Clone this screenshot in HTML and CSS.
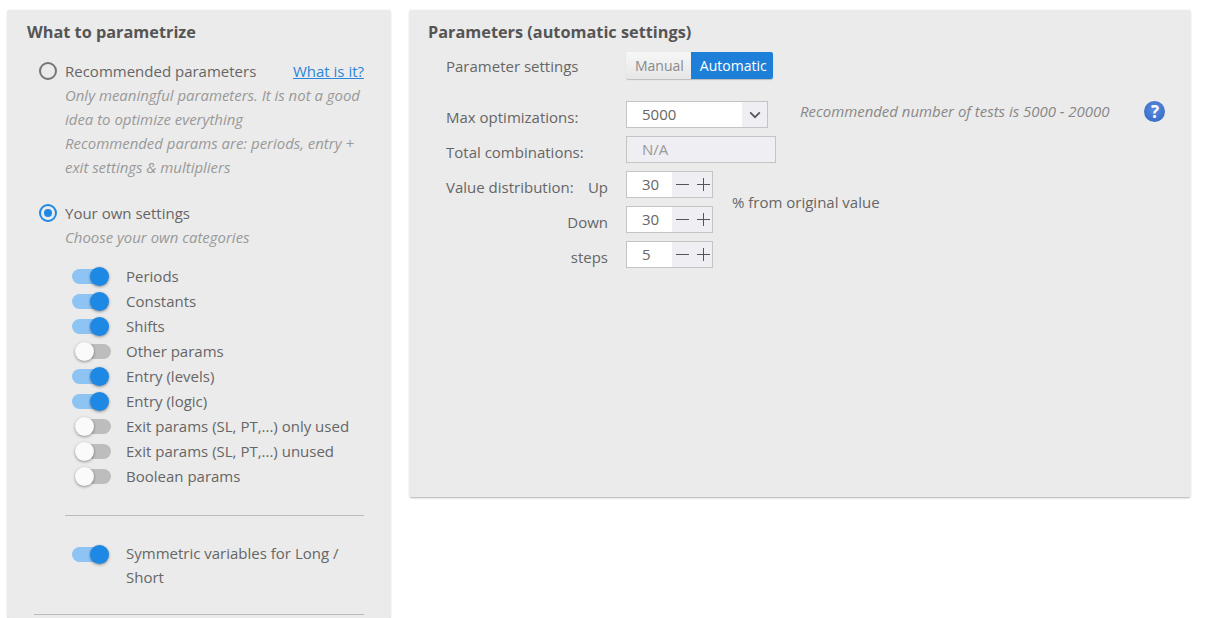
FILE: index.html
```html
<!DOCTYPE html>
<html lang="en">
<head>
    <meta charset="UTF-8">
    <title>Optimizer parameters</title>
    <link rel="stylesheet" href="styles.css">
</head>
<body>
    <div class="page">
        <div class="panel panel-left">
            <h2>What to parametrize</h2>

            <div class="radio-row">
                <span class="radio"></span>
                <span class="radio-label">Recommended parameters</span>
                <a class="help-link" href="#">What is it?</a>
            </div>
            <p class="hint">Only meaningful parameters. It is not a good idea to optimize everything<br>Recommended params are: periods, entry + exit settings &amp; multipliers</p>

            <div class="radio-row radio-row-own">
                <span class="radio checked"></span>
                <span class="radio-label">Your own settings</span>
            </div>
            <p class="hint">Choose your own categories</p>

            <ul class="switches">
                <li><span class="switch on"></span>Periods</li>
                <li><span class="switch on"></span>Constants</li>
                <li><span class="switch on"></span>Shifts</li>
                <li><span class="switch"></span>Other params</li>
                <li><span class="switch on"></span>Entry (levels)</li>
                <li><span class="switch on"></span>Entry (logic)</li>
                <li><span class="switch"></span>Exit params (SL, PT,...) only used</li>
                <li><span class="switch"></span>Exit params (SL, PT,...) unused</li>
                <li><span class="switch"></span>Boolean params</li>
            </ul>

            <hr class="rule">

            <div class="symmetric">
                <span class="switch on"></span>
                <span>Symmetric variables for Long / Short</span>
            </div>

            <hr class="rule rule-wide">
        </div>

        <div class="panel panel-right">
            <h2>Parameters (automatic settings)</h2>

            <div class="row row-mode">
                <label class="row-label">Parameter settings</label>
                <div class="toggle">
                    <span class="toggle-item">Manual</span>
                    <span class="toggle-item active">Automatic</span>
                </div>
            </div>

            <div class="row">
                <label class="row-label">Max optimizations:</label>
                <div class="field select">
                    <span class="field-value">5000</span>
                    <span class="select-arrow">
                        <svg width="12" height="8" viewBox="0 0 12 8"><path d="M1.2 1.4 6 6.2l4.8-4.8" fill="none" stroke="#555" stroke-width="1.7"/></svg>
                    </span>
                </div>
                <em class="rec-note">Recommended number of tests is 5000 - 20000</em>
                <span class="help-icon">?</span>
            </div>

            <div class="row">
                <label class="row-label">Total combinations:</label>
                <div class="field readonly"><span class="field-value">N/A</span></div>
            </div>

            <div class="distribution">
                <div class="dist-rows">
                    <div class="row">
                        <label class="row-label dist-label"><span>Value distribution:</span><span>Up</span></label>
                        <div class="field stepper">
                            <span class="field-value">30</span>
                            <span class="step-buttons"><i class="minus"></i><i class="plus"></i></span>
                        </div>
                    </div>
                    <div class="row">
                        <label class="row-label dist-label end"><span>Down</span></label>
                        <div class="field stepper">
                            <span class="field-value">30</span>
                            <span class="step-buttons"><i class="minus"></i><i class="plus"></i></span>
                        </div>
                    </div>
                    <div class="row">
                        <label class="row-label dist-label end"><span>steps</span></label>
                        <div class="field stepper">
                            <span class="field-value">5</span>
                            <span class="step-buttons"><i class="minus"></i><i class="plus"></i></span>
                        </div>
                    </div>
                </div>
                <span class="dist-note">% from original value</span>
            </div>
        </div>
    </div>
</body>
</html>
```

FILE: styles.css
```css
html, body {
    height: 100%;
    margin: 0;
    overflow: hidden;
}

body {
    font-family: "Open Sans", "Noto Sans", sans-serif;
    font-size: 15px;
    line-height: 24px;
    color: #666;
    background: #fff;
}

.page {
    display: flex;
    align-items: flex-start;
    gap: 18px;
    padding: 10px 30px 0 7px;
}

.panel {
    background: #ebebeb;
    border-radius: 2px;
    box-shadow: 0 2px 2px -1px rgba(0, 0, 0, 0.3), 0 0 2px rgba(0, 0, 0, 0.08);
    box-sizing: border-box;
}

.panel-left {
    flex: 0 0 384px;
    height: 608px;
    padding: 10px 27px 0 20px;
}

.panel-right {
    flex: 1;
    height: 487px;
    padding: 10px 20px 0 19px;
}

h2 {
    margin: 0;
    font-size: 16.3px;
    font-weight: 700;
    line-height: 24px;
    color: #555;
}

/* left column */
.radio-row {
    display: flex;
    align-items: center;
    margin: 15px 0 0 12px;
    height: 24px;
}

.radio-row-own {
    margin-top: 22px;
}

.radio {
    box-sizing: border-box;
    width: 18px;
    height: 18px;
    margin-right: 8px;
    border: 2px solid #757575;
    border-radius: 50%;
    position: relative;
}

.radio.checked {
    border-color: #1e88e5;
}

.radio.checked::after {
    content: "";
    position: absolute;
    left: 3px;
    top: 3px;
    width: 8px;
    height: 8px;
    border-radius: 50%;
    background: #1e88e5;
}

.radio-label {
    flex: 1;
}

.help-link {
    color: #2a86d8;
}

.hint {
    margin: 0 0 0 38px;
    font-size: 14.95px;
    font-style: italic;
    color: #999;
}

.switches {
    list-style: none;
    margin: 14px 0 0;
    padding: 0 0 0 45px;
}

.switches li {
    display: flex;
    align-items: center;
    height: 25px;
    white-space: nowrap;
}

.switch {
    flex: none;
    position: relative;
    width: 39px;
    height: 15px;
    margin-top: 1px;
    margin-right: 15px;
}

/* track sits left when on, right when off */
.switch::before {
    content: "";
    position: absolute;
    top: 0;
    left: 5px;
    width: 34px;
    height: 15px;
    border-radius: 8px;
    background: #bdbdbd;
}

.switch::after {
    content: "";
    position: absolute;
    top: -2px;
    left: 3px;
    width: 19px;
    height: 19px;
    border-radius: 50%;
    background: #fafafa;
    box-shadow: 0 1px 3px rgba(0, 0, 0, 0.4);
}

.switch.on::before {
    left: 0;
    background: #8ec4f4;
}

.switch.on::after {
    left: 18px;
    background: #1e88e5;
}

.rule {
    margin: 27px 0 0 38px;
    border: 0;
    border-top: 1px solid #bbb;
}

.rule-wide {
    margin: 25px 0 0 7px;
}

.symmetric {
    display: flex;
    align-items: flex-start;
    margin: 25px 0 0 45px;
}

.symmetric .switch {
    margin-top: 6px;
}

/* right column */
.row {
    display: flex;
    align-items: center;
    height: 27px;
    margin-bottom: 8px;
}

.row-mode {
    margin: 8px 0 22px;
}

.row-label {
    flex: none;
    box-sizing: border-box;
    width: 198px;
    padding: 4px 18px 0 18px;
}

.row-mode .row-label {
    padding-top: 0;
}

.dist-label {
    display: flex;
    justify-content: space-between;
}

.dist-label.end {
    justify-content: flex-end;
}

.toggle {
    display: flex;
    height: 27px;
    border-radius: 2px;
    overflow: hidden;
    box-shadow: 0 1px 1px rgba(0, 0, 0, 0.2);
}

.toggle-item {
    padding: 0 7px 0 9px;
    line-height: 27px;
    font-size: 14px;
    color: #8a8a8a;
    background: linear-gradient(#f7f7f7, #e6e6e6);
}

.toggle-item.active {
    padding-right: 6px;
    color: #fff;
    background: #1e7fd8;
}

.field {
    display: flex;
    box-sizing: border-box;
    height: 27px;
    border: 1px solid #c4c4c4;
    background: #fff;
    color: #666;
}

.field-value {
    flex: 1;
    padding-left: 15px;
    line-height: 24px;
}

.select {
    width: 142px;
}

.select-arrow {
    display: flex;
    align-items: center;
    justify-content: center;
    width: 25px;
    background: #eeeef3;
}

.readonly {
    width: 150px;
    background: #eeeef3;
    color: #999;
}

.stepper {
    width: 87px;
}

.step-buttons {
    display: flex;
    width: 40px;
    background: #eeeef3;
}

.step-buttons i {
    position: relative;
    flex: 1;
}

.step-buttons i::before,
.step-buttons .plus::after {
    content: "";
    position: absolute;
    left: 4px;
    top: 11.5px;
    width: 13px;
    height: 1.5px;
    background: #555;
}

.step-buttons .plus::before {
    left: 5px;
}

.step-buttons .plus::after {
    left: 10.75px;
    top: 6px;
    width: 1.5px;
    height: 13px;
}

.rec-note {
    margin-left: 32px;
    font-size: 14.95px;
    color: #888;
    position: relative;
    top: -4px;
}

.help-icon {
    width: 21px;
    height: 21px;
    margin-left: 35px;
    position: relative;
    top: -3px;
    border-radius: 50%;
    background: radial-gradient(circle at 50% 40%, #5b8fe0, #2f62c0);
    color: #fff;
    font-size: 17px;
    font-weight: 700;
    line-height: 21px;
    text-align: center;
}

.distribution {
    display: flex;
    align-items: flex-start;
}

.dist-note {
    margin: 19px 0 0 19px;
}
```
